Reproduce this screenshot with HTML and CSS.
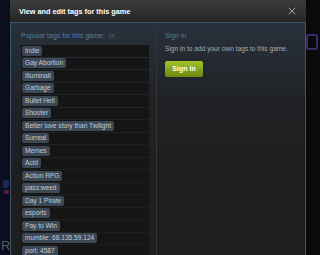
FILE: index.html
```html
<!DOCTYPE html>
<html lang="en">

<head>
    <meta charset="UTF-8">
    <title>View and edit tags for this game</title>
    <link rel="stylesheet" href="styles.css">
</head>

<body>
    <div class="backdrop">
        <span class="bg-letter">R</span>
        <span class="bg-art art-1"></span>
        <span class="bg-art art-2"></span>
        <span class="bg-art art-3"></span>
    </div>

    <div class="modal">
        <div class="modal-header">
            <span class="modal-title">View and edit tags for this game</span>
            <span class="modal-close">
                <svg viewBox="0 0 10 10" width="8" height="8">
                    <path d="M1 1L9 9M9 1L1 9" />
                </svg>
            </span>
        </div>

        <div class="modal-body">
            <div class="tags-col">
                <div class="col-title">Popular tags for this game: <span class="help">(?)</span></div>
                <div class="tag-list">
                    <div class="tag-row"><span class="tag">Indie</span></div>
                    <div class="tag-row"><span class="tag">Gay Abortion</span></div>
                    <div class="tag-row"><span class="tag">Illuminati</span></div>
                    <div class="tag-row"><span class="tag">Garbage</span></div>
                    <div class="tag-row"><span class="tag">Bullet Hell</span></div>
                    <div class="tag-row"><span class="tag">Shooter</span></div>
                    <div class="tag-row"><span class="tag">Better love story than Twilight</span></div>
                    <div class="tag-row"><span class="tag">Surreal</span></div>
                    <div class="tag-row"><span class="tag">Memes</span></div>
                    <div class="tag-row"><span class="tag">Acid</span></div>
                    <div class="tag-row"><span class="tag">Action RPG</span></div>
                    <div class="tag-row"><span class="tag">pass:weed</span></div>
                    <div class="tag-row"><span class="tag">Day 1 Pirate</span></div>
                    <div class="tag-row"><span class="tag">esports</span></div>
                    <div class="tag-row"><span class="tag">Pay to Win</span></div>
                    <div class="tag-row"><span class="tag">mumble: 68.135.59.124</span></div>
                    <div class="tag-row"><span class="tag">port: 4587</span></div>
                </div>
            </div>

            <div class="signin-col">
                <div class="col-title">Sign in</div>
                <p class="signin-text">Sign in to add your own tags to this game.</p>
                <button class="btn-green">Sign in</button>
            </div>
        </div>
    </div>
</body>

</html>
```

FILE: styles.css
```css
body {
    margin: 0;
    height: 255px;
    overflow: hidden;
    background: #0b0b10;
    font-family: 'Liberation Sans', Arial, sans-serif;
    color: #c6d4df;
}

.backdrop {
    position: absolute;
    inset: 0;
    background: linear-gradient(to right, #0d1020 0, #0b0c16 10px, #0a0a0a 10px);
}

.bg-letter {
    position: absolute;
    left: 1px;
    bottom: 2px;
    font-size: 13px;
    color: #555a60;
}

.bg-art {
    position: absolute;
    border-radius: 2px;
}

.art-1 {
    left: 3px;
    top: 180px;
    width: 6px;
    height: 8px;
    background: #1d2a55;
}

.art-2 {
    left: 4px;
    top: 190px;
    width: 5px;
    height: 4px;
    background: #5a1a4a;
}

.art-3 {
    right: 2px;
    top: 34px;
    width: 8px;
    height: 12px;
    border: 2px solid #3a2a6a;
}

.modal {
    position: relative;
    margin-left: 10px;
    width: 296px;
}

.modal-header {
    height: 22px;
    display: flex;
    align-items: center;
    justify-content: space-between;
    padding: 0 10px 0 9px;
    background: linear-gradient(to bottom, #3c3c3c, #262626);
}

.modal-title {
    font-size: 7.3px;
    font-weight: bold;
    color: #ffffff;
}

.modal-close svg {
    display: block;
    stroke: #b0b0b0;
    stroke-width: 1.1;
}

.modal-body {
    display: flex;
    height: 233px;
    overflow: hidden;
    border: 1px solid #3a5570;
    border-bottom: none;
    background: linear-gradient(to bottom, #28313c 0, #202225 80px, #1e1e1e 160px);
    padding: 7px 0 0 10px;
}

.tags-col {
    width: 128px;
    padding-right: 7px;
    border-right: 1px solid #333538;
}

.col-title {
    font-size: 7px;
    color: #4f7ca8;
    height: 12px;
    line-height: 12px;
}

.help {
    font-size: 5px;
    color: #6b7580;
    margin-left: 2px;
}

.tag-list {
    margin-top: 3px;
    display: flex;
    flex-direction: column;
    gap: 1px;
}

.tag-row {
    flex: none;
    height: 11.5px;
    background: #151515;
    display: flex;
    align-items: center;
    padding-left: 1px;
}

.tag {
    height: 10px;
    line-height: 10px;
    padding: 0 3px;
    border-radius: 2px;
    background: #3c4856;
    color: #c5ccd4;
    font-size: 6.6px;
    white-space: nowrap;
}

.signin-col {
    padding-left: 8px;
}

.signin-text {
    margin: 1px 0 2px;
    font-size: 6.6px;
    line-height: 12px;
    color: #a8acb0;
}

.btn-green {
    width: 38px;
    height: 16px;
    padding: 0;
    border: none;
    border-radius: 2px;
    background: linear-gradient(to bottom, #a4c22a, #6a8a12);
    color: #ffffff;
    font-family: inherit;
    font-size: 7px;
    font-weight: bold;
}
```
